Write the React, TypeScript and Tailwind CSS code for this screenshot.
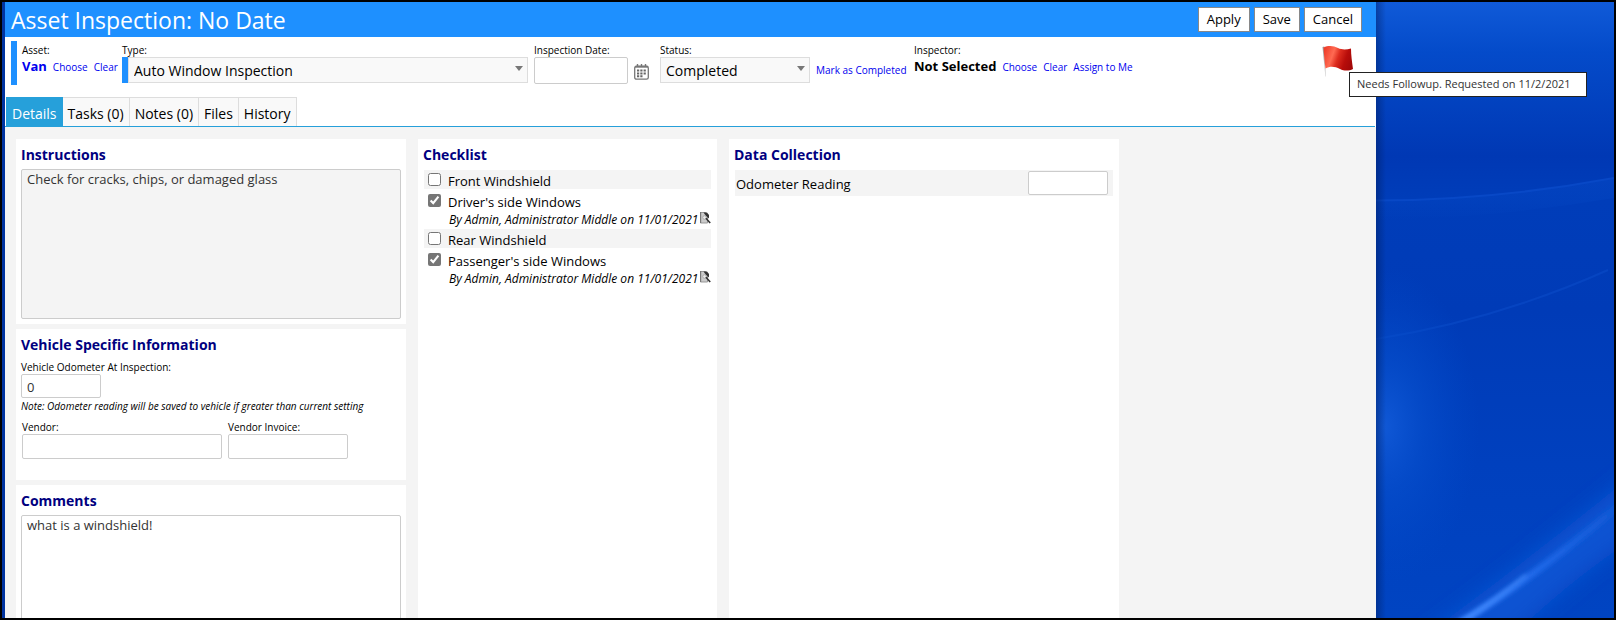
import { useState } from "react";
import type { ReactNode } from "react";

const tabs = ["Details", "Tasks (0)", "Notes (0)", "Files", "History"];

const checks = [
  { id: "front", name: "Front Windshield", done: false },
  { id: "driver", name: "Driver's side Windows", done: true, by: "By Admin, Administrator Middle on 11/01/2021" },
  { id: "rear", name: "Rear Windshield", done: false },
  { id: "passenger", name: "Passenger's side Windows", done: true, by: "By Admin, Administrator Middle on 11/01/2021" },
];

const inputClass = "block rounded-[2px] border border-[#ccc] px-[5px] text-[13px] text-[#333] outline-none";

function TextLink({ children }: { children: ReactNode }) {
  return (
    <a href="#" className="whitespace-nowrap text-[10px] text-[#0000ee]">
      {children}
    </a>
  );
}

function Card({ title, className = "", children }: { title: string; className?: string; children: ReactNode }) {
  return (
    <section className={`bg-white px-[5px] pt-[5px] ${className}`}>
      <h2 className="h-[25px] text-[14px] leading-[21px] font-bold text-[#000080]">{title}</h2>
      {children}
    </section>
  );
}

function Dropdown({ id, value, className = "" }: { id: string; value: string; className?: string }) {
  return (
    <div className={`relative h-[26px] ${className}`}>
      <select id={id} defaultValue={value} className="block h-full w-full appearance-none border border-[#ddd] bg-[#f9f9f9] px-[5px] text-[14px] text-black outline-none">
        <option>{value}</option>
      </select>
      <svg className="pointer-events-none absolute top-[9px] right-[5px]" width="8" height="5" viewBox="0 0 8 5">
        <path d="M0 0h8L4 5z" fill="#777" />
      </svg>
    </div>
  );
}

function CalendarIcon() {
  return (
    <svg width="15" height="16" viewBox="0 0 15 16" fill="none">
      <path d="M3.5 0v3M7.5 0v3M11.5 0v3" stroke="#777" strokeWidth="1.4" />
      <rect x="0.7" y="2.2" width="13.6" height="13" rx="1.8" stroke="#777" strokeWidth="1.3" />
      <path d="M1 2.8h13" stroke="#777" strokeWidth="1.8" />
      <path d="M3 6.5h2.2M6.3 6.5h2.2M9.6 6.5h2.2M3 9.4h2.2M6.3 9.4h2.2M9.6 9.4h2.2M3 12.3h2.2M6.3 12.3h2.2" stroke="#666" strokeWidth="2" />
    </svg>
  );
}

function HistoryIcon() {
  return (
    <svg width="11" height="12" viewBox="0 0 11 12">
      <path d="M0.5 0.5h5l2 2v8.5h-7z" fill="#ccc" stroke="#999" />
      <path d="M0.6 0v11" stroke="#777" strokeWidth="1.2" />
      <path d="M3.5 0.5h3.5l2 2.5v3.5L6 4z" fill="#333" />
      <circle cx="4.5" cy="5.5" r="1.8" fill="#eee" stroke="#aaa" />
      <path d="M6 6.2l4.2 4.8" stroke="#333" strokeWidth="1.6" />
    </svg>
  );
}

function FlagIcon() {
  return (
    <svg width="32" height="34" viewBox="0 0 32 34">
      <defs>
        <linearGradient id="cloth" x1="0" y1="0.3" x2="1" y2="0.6">
          <stop offset="0" stopColor="#ef3f2c" />
          <stop offset="0.3" stopColor="#ff6a52" />
          <stop offset="0.5" stopColor="#dd2c1e" />
          <stop offset="0.75" stopColor="#b80d0a" />
          <stop offset="1" stopColor="#a30808" />
        </linearGradient>
        <linearGradient id="pole" x1="0" y1="0" x2="0" y2="1">
          <stop offset="0" stopColor="#999" />
          <stop offset="1" stopColor="#ddd" />
        </linearGradient>
      </defs>
      <path d="M0.5 2L2.3 1.5L4 31L3.4 32z" fill="url(#pole)" />
      <path d="M1.5 2.5C7 0 12 1 16 3C20 5 25 4.5 29 3.5C29 10 30 17 31 24C27 26 22 26 18 24C13 21.5 8 21 3.5 23.5C2.5 16 2 9 1.5 2.5z" fill="url(#cloth)" />
    </svg>
  );
}

function Wallpaper() {
  return (
    <svg className="h-full w-full" viewBox="0 0 238 616" preserveAspectRatio="none">
      <defs>
        <linearGradient id="sky" x1="0" y1="0" x2="0" y2="1">
          <stop offset="0" stopColor="#105ad8" />
          <stop offset="0.08" stopColor="#044bca" />
          <stop offset="0.25" stopColor="#0038b4" />
          <stop offset="0.32" stopColor="#003db9" />
          <stop offset="0.5" stopColor="#003bb7" />
          <stop offset="0.75" stopColor="#0040be" />
          <stop offset="1" stopColor="#0044c2" />
        </linearGradient>
        <radialGradient id="glow">
          <stop offset="0" stopColor="#1058d6" />
          <stop offset="0.4" stopColor="#064ecc" stopOpacity="0.7" />
          <stop offset="1" stopColor="#0048c8" stopOpacity="0" />
        </radialGradient>
        <linearGradient id="streak" x1="0" y1="1" x2="1" y2="0">
          <stop offset="0" stopColor="#3c86ff" />
          <stop offset="0.5" stopColor="#1f68e8" />
          <stop offset="1" stopColor="#0f58d4" />
        </linearGradient>
        <linearGradient id="edge" x1="0" y1="0" x2="1" y2="0">
          <stop offset="0" stopColor="#001850" stopOpacity="0.4" />
          <stop offset="1" stopColor="#001850" stopOpacity="0" />
        </linearGradient>
        <linearGradient id="fade" x1="0" y1="0" x2="0" y2="1">
          <stop offset="0" stopColor="#0c56d4" stopOpacity="0.55" />
          <stop offset="1" stopColor="#0c56d4" stopOpacity="0" />
        </linearGradient>
        <filter id="soft" x="-50%" y="-50%" width="200%" height="200%">
          <feGaussianBlur stdDeviation="10" />
        </filter>
        <filter id="softer" x="-50%" y="-50%" width="200%" height="200%">
          <feGaussianBlur stdDeviation="2" />
        </filter>
      </defs>
      <rect width="238" height="616" fill="url(#sky)" />
      <path d="M0 198Q120 198 238 176V196Q120 216 0 218z" fill="url(#fade)" opacity="0.5" />
      <path d="M0 198.5Q120 198 238 176" stroke="#0848c6" strokeWidth="2" fill="none" />
      <path d="M0 337Q120 318 232 268" stroke="#0848c4" strokeWidth="2" fill="none" opacity="0.7" />
      <ellipse cx="8" cy="425" rx="95" ry="160" fill="url(#glow)" />
      <path d="M40 640Q150 560 260 470V535Q190 580 120 650z" fill="#0a52d2" filter="url(#soft)" />
      <path d="M72 628Q150 582 245 502" stroke="url(#streak)" strokeWidth="7" fill="none" filter="url(#softer)" />
      <path d="M82 622Q120 598 150 573" stroke="#4a90ff" strokeWidth="2" fill="none" filter="url(#softer)" />
      <rect width="10" height="616" fill="url(#edge)" />
    </svg>
  );
}

export default function App() {
  const [active, setActive] = useState("Details");
  const [done, setDone] = useState<Record<string, boolean>>(Object.fromEntries(checks.map((c) => [c.id, c.done])));

  return (
    <div className="flex h-screen w-full overflow-hidden border-2 border-black bg-[#0033a0] pl-[3px] font-['Open_Sans','Noto_Sans',sans-serif] text-black">
      <main className="flex min-w-0 flex-1 flex-col bg-white">
        <header className="flex h-[35px] shrink-0 items-center justify-between bg-[#1e90ff] pr-[14px] pl-[6px]">
          <h1 className="pt-[2px] text-[23px] leading-[35px] text-white">Asset Inspection: No Date</h1>
          <div className="flex gap-1">
            <button className="h-[25px] border border-[#888] bg-white px-2 text-[13px]">Apply</button>
            <button className="h-[25px] border border-[#888] bg-white px-2 text-[13px]">Save</button>
            <button className="h-[25px] border border-[#888] bg-white px-2 text-[13px]">Cancel</button>
          </div>
        </header>

        <div className="flex h-[60px] shrink-0 items-start pt-1 pr-[22px] pl-[6px]">
          <div className="mr-[6px] h-[44px] w-[105px] border-l-[6px] border-[#1e90ff] pt-[2px] pl-[5px]">
            <div className="text-[10px] leading-[14px]">Asset:</div>
            <div className="flex items-baseline gap-[6px] leading-[18px]">
              <a href="#" className="text-[13px] font-bold text-[#0000ee]">Van</a>
              <TextLink>Choose</TextLink>
              <TextLink>Clear</TextLink>
            </div>
          </div>
          <div className="mr-[6px] w-[406px] pt-[2px]">
            <label htmlFor="type" className="block text-[10px] leading-[14px]">Type:</label>
            <Dropdown id="type" value="Auto Window Inspection" className="border-l-[6px] border-[#1e90ff]" />
          </div>
          <div className="mr-[6px] w-[94px] pt-[2px]">
            <label htmlFor="date" className="block text-[10px] leading-[14px]">Inspection Date:</label>
            <input id="date" className={`${inputClass} h-[27px] w-full bg-white`} />
          </div>
          <button aria-label="Pick a date" className="mt-[23px] mr-[11px]">
            <CalendarIcon />
          </button>
          <div className="mr-[6px] w-[150px] pt-[2px]">
            <label htmlFor="status" className="block text-[10px] leading-[14px]">Status:</label>
            <Dropdown id="status" value="Completed" />
          </div>
          <div className="mr-[6px] w-[92px] pt-[18px] leading-[18px]">
            <TextLink>Mark as Completed</TextLink>
          </div>
          <div className="pt-[2px]">
            <div className="text-[10px] leading-[14px]">Inspector:</div>
            <div className="flex items-baseline gap-[6px] leading-[18px]">
              <span className="text-[13px] font-bold whitespace-nowrap">Not Selected</span>
              <TextLink>Choose</TextLink>
              <TextLink>Clear</TextLink>
              <TextLink>Assign to Me</TextLink>
            </div>
          </div>
          <div className="relative mt-1 ml-auto">
            <FlagIcon />
            <div role="tooltip" className="absolute top-[27px] left-[27px] z-10 flex h-[25px] w-[238px] items-center border border-[#222] bg-white pl-[7px] text-[11px] whitespace-nowrap text-[#333]">
              Needs Followup. Requested on 11/2/2021
            </div>
          </div>
        </div>

        <nav className="mr-px flex h-[30px] shrink-0 border-b border-[#26a0da] pl-px">
          {tabs.map((t) => (
            <button
              key={t}
              onClick={() => setActive(t)}
              className={
                t === active
                  ? "border border-[#26a0da] bg-[#26a0da] px-[5px] pt-[3px] text-[14px] text-white"
                  : "border-t border-r border-[#ddd] bg-[#f9f9f9] px-[5px] pt-[3px] text-[14px] text-black"
              }
            >
              {t}
            </button>
          ))}
        </nav>

        <div className="flex min-h-0 flex-1 gap-3 overflow-hidden bg-[#f4f4f4] pt-3 pl-[11px]">
          <div className="flex w-[390px] flex-col gap-[5px]">
            <Card title="Instructions" className="shrink-0 pb-[5px]">
              <textarea
                readOnly
                aria-label="Instructions"
                className={`${inputClass} h-[150px] w-full resize-none bg-[#f4f4f4] leading-[18px]`}
                defaultValue="Check for cracks, chips, or damaged glass"
              />
            </Card>
            <Card title="Vehicle Specific Information" className="shrink-0 pb-[21px]">
              <label htmlFor="odometer" className="mt-[1px] block text-[10px] leading-[14px]">Vehicle Odometer At Inspection:</label>
              <input id="odometer" defaultValue="0" className={`${inputClass} h-6 w-[80px] bg-white pt-[2px]`} />
              <p className="text-[10px] leading-[16px] italic">Note: Odometer reading will be saved to vehicle if greater than current setting</p>
              <div className="flex gap-[6px] pt-[6px] pl-px">
                <div>
                  <label htmlFor="vendor" className="block text-[10px] leading-[14px]">Vendor:</label>
                  <input id="vendor" className={`${inputClass} h-[25px] w-[200px] bg-white`} />
                </div>
                <div>
                  <label htmlFor="invoice" className="block text-[10px] leading-[14px]">Vendor Invoice:</label>
                  <input id="invoice" className={`${inputClass} h-[25px] w-[120px] bg-white`} />
                </div>
              </div>
            </Card>
            <Card title="Comments" className="shrink-0 pb-[5px]">
              <textarea
                aria-label="Comments"
                className={`${inputClass} h-[150px] w-full resize-none bg-white leading-[18px]`}
                defaultValue="what is a windshield!"
              />
            </Card>
          </div>

          <Card title="Checklist" className="w-[299px]">
            <ul className="mt-px mr-px ml-px">
              {checks.map((c) => (
                <li key={c.id} className={c.by ? "h-10 pt-[2px] pl-1" : "h-[19px] bg-[#f4f4f4] pl-1"}>
                  <div className="flex h-[22px] items-start gap-[7px] pt-[3px]">
                    <input
                      id={c.id}
                      type="checkbox"
                      checked={done[c.id]}
                      onChange={() => setDone({ ...done, [c.id]: !done[c.id] })}
                      className="size-[13px] accent-[#767676]"
                    />
                    <label htmlFor={c.id} className="text-[13px] leading-[16px]">{c.name}</label>
                  </div>
                  {c.by && (
                    <div className="-mt-px flex items-start justify-between pl-[21px]">
                      <span className="text-[12px] leading-[16px] whitespace-nowrap italic">{c.by}</span>
                      <button aria-label="Show history">
                        <HistoryIcon />
                      </button>
                    </div>
                  )}
                </li>
              ))}
            </ul>
          </Card>

          <Card title="Data Collection" className="w-[390px]">
            <div className="mt-px mr-px ml-px flex h-[26px] items-center justify-between bg-[#f4f4f4] pr-[5px] pl-px">
              <label htmlFor="reading" className="pt-[3px] text-[13px]">Odometer Reading</label>
              <input id="reading" className={`${inputClass} h-6 w-[80px] bg-white`} />
            </div>
          </Card>
        </div>
      </main>
      <aside className="w-[238px] shrink-0">
        <Wallpaper />
      </aside>
    </div>
  );
}
